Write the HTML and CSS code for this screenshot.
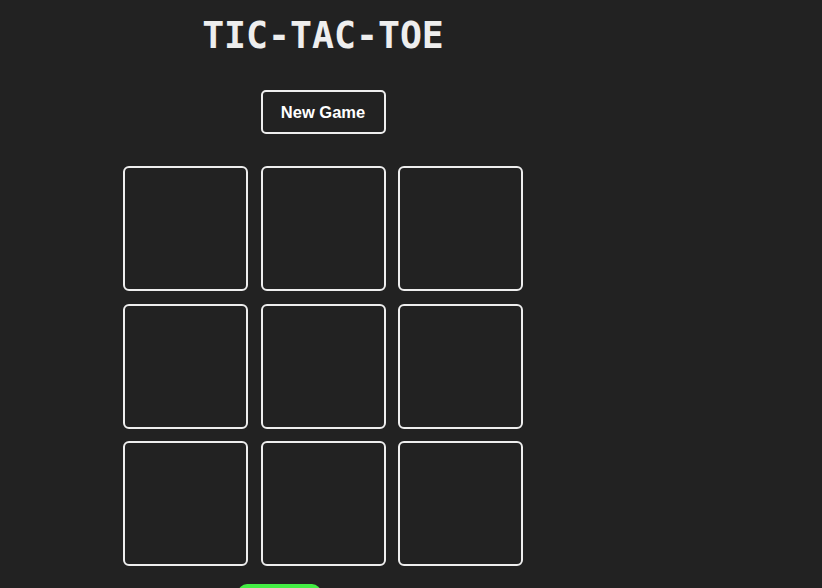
FILE: index.html
```html
<!DOCTYPE html>
<html lang="en">
<head>
<meta charset="utf-8">
<title>Tic-Tac-Toe</title>
<link rel="stylesheet" href="styles.css">
</head>
<body>
<main class="game">
  <h1 class="title">TIC-TAC-TOE</h1>
  <button class="new-game">New Game</button>
  <div class="board">
    <div class="cell"></div>
    <div class="cell"></div>
    <div class="cell"></div>
    <div class="cell"></div>
    <div class="cell"></div>
    <div class="cell"></div>
    <div class="cell"></div>
    <div class="cell"></div>
    <div class="cell"></div>
  </div>
  <div class="status"></div>
</main>
</body>
</html>
```
FILE: styles.css
```css
html, body {
  margin: 0;
  background: #222222;
  height: 100%;
  overflow: hidden;
}
.game {
  width: 400px;
  margin-left: 123px;
  display: flex;
  flex-direction: column;
  align-items: center;
}
.title {
  margin: 14px 0 0 0;
  font-family: "DejaVu Sans Mono", monospace;
  font-weight: bold;
  font-size: 36.5px;
  line-height: 44px;
  color: #eeeeee;
}
.new-game {
  margin-top: 32px;
  box-sizing: border-box;
  width: 125px;
  height: 44px;
  background: transparent;
  border: 2px solid #eeeeee;
  border-radius: 5px;
  color: #ffffff;
  font-family: "Liberation Sans", Arial, sans-serif;
  font-weight: bold;
  font-size: 16.5px;
  padding: 0;
}
.board {
  margin-top: 32px;
  display: grid;
  grid-template-columns: repeat(3, 125px);
  grid-auto-rows: 125px;
  gap: 12.5px;
}
.cell {
  box-sizing: border-box;
  border: 2px solid #eeeeee;
  border-radius: 6px;
}
.status {
  margin-top: 18px;
  align-self: flex-start;
  margin-left: 115px;
  width: 83px;
  height: 40px;
  background: #44ee44;
  border-radius: 9px;
}
```
